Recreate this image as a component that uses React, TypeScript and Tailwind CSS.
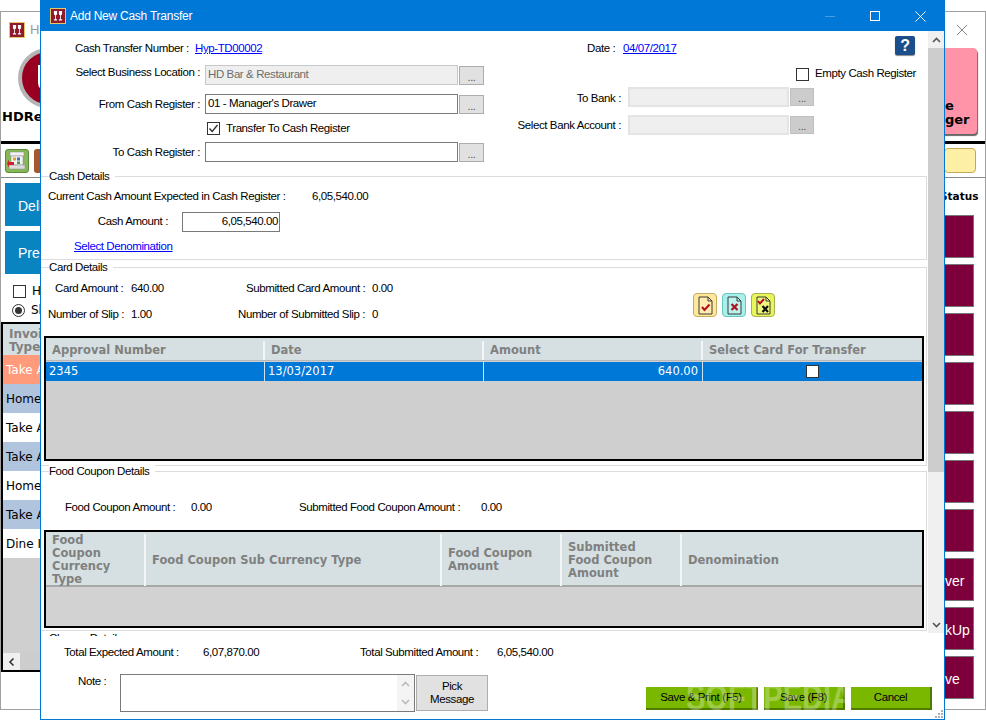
import React from 'react';

const sans = "font-['Liberation_Sans',Arial,sans-serif]";
const verdana = "font-['DejaVu_Sans',Verdana,sans-serif]";
const link = 'text-[#0000ff] underline whitespace-nowrap';
const browseBtn = 'flex items-end justify-center w-[25px] h-[19px] ml-[1px] bg-[#e1e1e1] border border-[#adadad] text-[11px] leading-[14px] text-[#555]';

function FormRow({ label, value, disabled }: { label: string; value?: string; disabled?: boolean }) {
  return (
    <div className="flex items-center h-[20px]">
      <div className={`w-[164px] pr-[5px] text-right whitespace-nowrap leading-[14px] ${disabled ? 'mb-[6px]' : ''}`}>{label}</div>
      <div className={`w-[253px] h-[20px] flex items-center px-[2px] border ${disabled ? 'bg-[#efefef] border-[#c8c8c8] text-[#6d6d6d]' : 'bg-white border-[#7a7a7a]'}`}>{value}</div>
      <div className={browseBtn}>...</div>
    </div>
  );
}

function RightRow({ label, drop }: { label: string; drop?: boolean }) {
  return (
    <div className="flex items-center h-[20px]">
      <div className={`w-[114px] pr-[7px] text-right whitespace-nowrap leading-[14px] ${drop ? 'mt-[2px]' : ''}`}>{label}</div>
      <div className="w-[161px] h-[20px] bg-[#efefef] border-2 border-[#e4e4e4]" />
      <div className="flex items-end justify-center w-[24px] h-[18px] ml-[1px] bg-[#cccccc] border border-[#c0c0c0] text-[11px] leading-[14px] text-[#555]">...</div>
    </div>
  );
}

function Check({ checked }: { checked?: boolean }) {
  return (
    <span className="flex items-center justify-center w-[13px] h-[13px] border border-[#333] bg-white shrink-0">
      {checked && (
        <svg width="11" height="11" viewBox="0 0 11 11" fill="none" stroke="#333" strokeWidth="1.4">
          <path d="M1.5 5.5 L4.2 8.5 L9.5 2" />
        </svg>
      )}
    </span>
  );
}

function Fieldset({ title, className, children }: { title: string; className?: string; children?: React.ReactNode }) {
  return (
    <div className={`border-t border-r border-b border-[#dcdcdc] ${className ?? ''}`}>
      <div className="-mt-[8px] ml-[8px] w-fit bg-white pr-[6px] leading-[14px] whitespace-nowrap">{title}</div>
      {children}
    </div>
  );
}

function HeaderCell({ children, last }: { children: React.ReactNode; last?: boolean }) {
  return (
    <div className={`flex items-center pl-[6px] leading-[13px] whitespace-nowrap ${last ? '' : 'border-r-2 border-[#f4f6f6]'}`}>
      <span>{children}</span>
    </div>
  );
}

function DocIcon({ bg, border, mark }: { bg: string; border: string; mark: 'check' | 'cross' | 'both' }) {
  return (
    <div className={`w-[24px] h-[24px] rounded-[4px] border flex items-center justify-center ${bg} ${border}`}>
      <svg width="17" height="19" viewBox="0 0 17 19" fill="none">
        <path d="M2 1 H11 L15 5 V18 H2 Z" stroke="#3a3a3a" strokeWidth="1" fill="rgba(255,255,255,0.2)" />
        <path d="M11 1 V5 H15" stroke="#3a3a3a" strokeWidth="1" />
        {mark === 'check' && <path d="M5 11 L7.5 14 L12.5 8.5" stroke="#b01020" strokeWidth="2" />}
        {mark === 'cross' && <path d="M5.5 8 L11.5 14 M11.5 8 L5.5 14" stroke="#b01020" strokeWidth="2.2" />}
        {mark === 'both' && (
          <>
            <path d="M3 5 L5 7.5 L9 3" stroke="#b01020" strokeWidth="2" />
            <path d="M7.5 10 L13 16 M13 10 L7.5 16" stroke="#111" strokeWidth="2.2" />
          </>
        )}
      </svg>
    </div>
  );
}

function AppIcon() {
  return (
    <span className="flex items-center justify-center w-[16px] h-[16px] bg-[#8f1a2c] border border-[#e5c76b] shrink-0">
      <svg width="10" height="10" viewBox="0 0 11 11" fill="#fff">
        <path d="M1 0 H4.5 V3 A1.75 1.75 0 0 1 3.2 4.8 V9 H4.5 V10.5 H1 V9 H2.3 V4.8 A1.75 1.75 0 0 1 1 3 Z" />
        <path d="M6.5 0 H10 V3 A1.75 1.75 0 0 1 8.7 4.8 V9 H10 V10.5 H6.5 V9 H7.8 V4.8 A1.75 1.75 0 0 1 6.5 3 Z" />
      </svg>
    </span>
  );
}

function RegisterIcon() {
  return (
    <div className="w-[24px] h-[24px] rounded-[3px] bg-[#86b85a] border border-[#5d8a36] flex items-center justify-center">
      <svg width="20" height="20" viewBox="0 0 20 20">
        <rect x="3" y="1" width="14" height="4" fill="#f2f2f2" stroke="#888" strokeWidth="0.5" />
        <rect x="4" y="5" width="12" height="9" fill="#f4f4f4" stroke="#888" strokeWidth="0.5" />
        <rect x="6" y="6.5" width="3" height="3" fill="#e8a020" />
        <rect x="10" y="6.5" width="3" height="3" fill="#3a70c0" />
        <rect x="10" y="10.5" width="3" height="2.5" fill="#40a040" />
        <rect x="2" y="14" width="16" height="4" fill="#ddd" stroke="#888" strokeWidth="0.5" />
        <path d="M7 11 L2 11 L2 8.5 L0 12.5 L2 16.5 L2 14 L7 14 Z" fill="#d0202a" />
      </svg>
    </div>
  );
}

function ArrowUp({ color = '#555' }: { color?: string }) {
  return (
    <svg width="9" height="6" viewBox="0 0 9 6" fill="none" stroke={color} strokeWidth="1.6"><path d="M1 5 L4.5 1.5 L8 5" /></svg>
  );
}

function ArrowDown({ color = '#555' }: { color?: string }) {
  return (
    <svg width="9" height="6" viewBox="0 0 9 6" fill="none" stroke={color} strokeWidth="1.6"><path d="M1 1 L4.5 4.5 L8 1" /></svg>
  );
}

function GreenButton({ label, w }: { label: string; w: string }) {
  return (
    <div className={`${w} h-[23px] pt-[1px] flex items-center justify-center bg-[#7ab800] border-r-2 border-b-2 border-[#4e7a00] whitespace-nowrap`}>{label}</div>
  );
}

function BackgroundWindow() {
  const rows: [string, string, string][] = [
    ['Take A', 'bg-[#ff9a7a]', 'text-white'],
    ['Home', 'bg-[#b0c4de]', 'text-black'],
    ['Take A', 'bg-white', 'text-black'],
    ['Take A', 'bg-[#b0c4de]', 'text-black'],
    ['Home', 'bg-white', 'text-black'],
    ['Take A', 'bg-[#b0c4de]', 'text-black'],
    ['Dine I', 'bg-white', 'text-black'],
  ];
  const tiles = ['', '', '', '', '', '', '', 'ver', 'kUp', 've'];
  return (
    <div className="absolute left-0 top-[11px] w-[986px] h-[699px] bg-white border border-[#a0a0a0] overflow-hidden flex flex-col">
      <div className="h-[36px] flex items-center pl-[8px] shrink-0">
        <AppIcon />
        <span className={`ml-[5px] text-[13px] text-[#999] ${sans}`}>HD</span>
        <svg className="ml-auto mr-[17px]" width="12" height="12" viewBox="0 0 12 12" stroke="#888" strokeWidth="1"><path d="M1 1 L11 11 M11 1 L1 11" /></svg>
      </div>
      <div className="h-[93px] flex justify-between shrink-0">
        <div className="pl-[1px]">
          <div className="ml-[16px] w-[60px] h-[60px] rounded-full bg-[#99001f] border-[4px] border-[#b5b5b5] flex items-center justify-center">
            <span className="w-[20px] h-[26px] border-[3px] border-t-0 border-white rounded-b-[8px]" />
          </div>
          <div className={`font-bold text-[13px] leading-[18px] ${verdana}`}>HDRestaurant</div>
        </div>
        <div className={`relative w-[50px] h-[86px] rounded-[4px] bg-[#ff93a8] shadow-[1px_2px_1px_#666] mr-[8px] flex flex-col justify-end pb-[7px] pl-[18px] text-[13px] font-bold leading-[14px] ${verdana}`}>
          <span className="absolute left-[12px] top-[15px] w-[6px] h-[30px] bg-white border border-[#888] rounded-[1px]" />
          <span>e</span>
          <span>ger</span>
        </div>
      </div>
      <div className="h-[3px] bg-black shrink-0" />
      <div className="h-[34px] flex items-center justify-between pl-[4px] pr-[9px] border-b border-[#888] shrink-0">
        <div className="flex gap-[5px]">
          <RegisterIcon />
          <div className="w-[24px] h-[24px] rounded-[3px] bg-[#a5562c]" />
        </div>
        <div className="w-[32px] h-[25px] rounded-[4px] bg-[#fdf0a6] border border-[#c8a850]" />
      </div>
      <div className="flex-1 flex">
        <div className="w-[44px] shrink-0 overflow-hidden">
          <div className={`ml-[4px] mt-[5px] w-[80px] h-[43px] pt-[3px] bg-[#0a84c1] text-white text-[14px] flex items-center pl-[13px] ${sans}`}>Delivery</div>
          <div className={`ml-[4px] mt-[5px] w-[80px] h-[43px] pt-[2px] bg-[#0a84c1] text-white text-[14px] flex items-center pl-[13px] ${sans}`}>Pre</div>
          <div className={`flex items-center ml-[12px] mt-[11px] gap-[6px] text-[12px] leading-[13px] ${verdana}`}>
            <Check />
            <span>Hide</span>
          </div>
          <div className={`flex items-center ml-[11px] mt-[6px] gap-[6px] text-[12px] leading-[13px] ${verdana}`}>
            <span className="w-[13px] h-[13px] rounded-full border border-[#333] flex items-center justify-center shrink-0"><span className="w-[7px] h-[7px] rounded-full bg-[#333]" /></span>
            <span>Show</span>
          </div>
          <div className="mt-[5px] h-[350px] w-[60px] border-2 border-black bg-[#cfcfcf] flex flex-col">
            <div className={`h-[31px] bg-[#d6e0e2] text-[#808080] font-bold text-[12px] leading-[13px] pl-[6px] pt-[4px] shrink-0 ${verdana}`}>Invoice<br />Type</div>
            {rows.map(([t, bg, fg], i) => (
              <div key={i} className={`h-[29px] flex items-center pl-[3px] text-[12px] shrink-0 ${bg} ${fg} ${verdana}`}>{t}</div>
            ))}
            <div className="flex-1" />
            <div className="h-[17px] bg-[#f0f0f0] flex items-center"><span className="w-[17px] flex justify-center -rotate-90"><ArrowUp color="#333" /></span><span className="flex-1 h-full bg-[#cdcdcd]" /></div>
          </div>
        </div>
        <div className="flex-1" />
        <div className="w-[42px] shrink-0">
          <div className={`h-[37px] pt-[11px] -ml-[3px] font-bold text-[10.5px] leading-[14px] ${verdana}`}>Status</div>
          <div className="flex flex-col gap-[6px]">
            {tiles.map((t, i) => (
              <div key={i} className={`ml-[1px] w-[30px] h-[43px] pt-[3px] bg-[#7d003c] border border-[#777] text-white text-[14px] flex items-center overflow-hidden ${sans}`}>{t}</div>
            ))}
          </div>
        </div>
      </div>
    </div>
  );
}

function CashTransferDialog() {
  return (
    <div className="absolute left-[40px] top-0 w-[905px] h-[720px] bg-white border border-[#0078d7] flex flex-col overflow-hidden text-[11.5px] tracking-[-0.4px]">
      <div className="h-[30px] bg-[#0078d7] flex items-center pl-[9px] text-white text-[12px] tracking-[-0.25px] shrink-0">
        <AppIcon />
        <span className="ml-[4px]">Add New Cash Transfer</span>
        <div className="ml-auto flex items-center">
          <span className="w-[10px] h-px bg-[#4a9be0] mr-[35px]" />
          <span className="w-[10px] h-[10px] border border-white mr-[35px]" />
          <svg className="mr-[18px]" width="11" height="11" viewBox="0 0 11 11" stroke="#fff" strokeWidth="1"><path d="M0.5 0.5 L10.5 10.5 M10.5 0.5 L0.5 10.5" /></svg>
        </div>
      </div>

      <div className="flex h-[605px] shrink-0 overflow-hidden">
        <div className="w-[886px] shrink-0">
          <div className="flex h-[137px]">
            <div className="w-[473px] shrink-0 pt-[10px]">
              <div className="flex h-[14px] leading-[14px]">
                <div className="w-[154px] pl-[34px] whitespace-nowrap">Cash Transfer Number :</div>
                <a className={link}>Hyp-TD00002</a>
              </div>
              <div className="mt-[10px]"><FormRow label="Select Business Location :" value="HD Bar & Restaurant" disabled /></div>
              <div className="mt-[9px]"><FormRow label="From Cash Register :" value="01 - Manager's Drawer" /></div>
              <div className="mt-[8px] ml-[166px] flex items-center gap-[6px] leading-[13px] whitespace-nowrap"><Check checked /><span>Transfer To Cash Register</span></div>
              <div className="mt-[7px]"><FormRow label="To Cash Register :" /></div>
            </div>
            <div className="flex-1 pt-[10px] relative">
              <div className="flex h-[14px] leading-[14px] pl-[73px]">
                <span className="w-[36px] whitespace-nowrap">Date :</span>
                <a className={link}>04/07/2017</a>
              </div>
              <span className="absolute left-[381px] top-[5px] w-[20px] h-[19px] rounded-[2px] bg-[#1a4f8b] shadow-[0_1px_1px_#888] text-white font-bold text-[16px] leading-[19px] text-center">?</span>
              <div className="mt-[12px] pl-[282px] flex items-center gap-[6px] h-[14px] whitespace-nowrap"><Check /><span>Empty Cash Register</span></div>
              <div className="mt-[6px]"><RightRow label="To Bank :" drop /></div>
              <div className="mt-[8px]"><RightRow label="Select Bank Account :" /></div>
            </div>
          </div>

          <Fieldset title="Cash Details" className="mt-[8px] h-[84px]">
            <div className="flex pl-[7px] mt-[6px] leading-[14px] whitespace-nowrap">
              <span className="w-[264px]">Current Cash Amount Expected in Cash Register :</span>
              <span>6,05,540.00</span>
            </div>
            <div className="flex items-center mt-[9px] whitespace-nowrap">
              <span className="w-[127px] text-right">Cash Amount :</span>
              <span className="ml-[14px] w-[98px] h-[20px] border border-[#7a7a7a] flex items-center justify-end pr-[1px]">6,05,540.00</span>
            </div>
            <a className={`block ml-[33px] mt-[7px] leading-[14px] ${link}`}>Select Denomination</a>
          </Fieldset>

          <Fieldset title="Card Details" className="mt-[7px] h-[199px]">
            <div className="relative">
              <div className="flex mt-[7px] leading-[14px] h-[14px] whitespace-nowrap">
                <span className="w-[90px] pl-[14px]">Card Amount :</span>
                <span className="w-[115px]">640.00</span>
                <span className="w-[126px]">Submitted Card Amount :</span>
                <span>0.00</span>
              </div>
              <div className="flex mt-[12px] leading-[14px] h-[14px] whitespace-nowrap">
                <span className="w-[90px] pl-[7px]">Number of Slip :</span>
                <span className="w-[107px]">1.00</span>
                <span className="w-[134px]">Number of Submitted Slip :</span>
                <span>0</span>
              </div>
              <div className="absolute left-[652px] top-[12px] flex gap-[5px]">
                <DocIcon bg="bg-[#ffe89a]" border="border-[#c8ac60]" mark="check" />
                <DocIcon bg="bg-[#a8f0ea]" border="border-[#6cc4c0]" mark="cross" />
                <DocIcon bg="bg-[#e8f65a]" border="border-[#a8b050]" mark="both" />
              </div>
            </div>
            <div className={`mt-[15px] ml-[3px] w-[880px] h-[125px] border-2 border-black bg-[#cfcfcf] text-[11.5px] tracking-normal ${verdana}`}>
              <div className="grid grid-cols-[219px_219px_219px_219px] h-[23px] pt-[3px] bg-[#d6e0e2] border-b border-[#b8b8b8] text-[#808080] font-bold">
                <HeaderCell>Approval Number</HeaderCell>
                <HeaderCell>Date</HeaderCell>
                <HeaderCell>Amount</HeaderCell>
                <HeaderCell last>Select Card For Transfer</HeaderCell>
              </div>
              <div className="grid grid-cols-[219px_219px_219px_219px] h-[19px] mt-[1px] bg-[#0078d7] text-white items-center">
                <span className="pl-[3px] border-r border-[#d0e4f5] leading-[19px]">2345</span>
                <span className="pl-[3px] border-r border-[#d0e4f5] leading-[19px]">13/03/2017</span>
                <span className="pr-[4px] text-right border-r border-[#d0e4f5] leading-[19px]">640.00</span>
                <span className="flex justify-center"><span className="w-[13px] h-[13px] bg-white border border-[#333]" /></span>
              </div>
            </div>
          </Fieldset>

          <Fieldset title="Food Coupon Details" className="mt-[5px] h-[160px]">
            <div className="flex mt-[22px] pl-[24px] leading-[14px] whitespace-nowrap">
              <span className="w-[126px]">Food Coupon Amount :</span>
              <span className="w-[108px]">0.00</span>
              <span className="w-[182px]">Submitted Food Coupon Amount :</span>
              <span>0.00</span>
            </div>
            <div className={`mt-[16px] ml-[3px] w-[880px] h-[98px] border-2 border-black bg-[#d2d2d2] text-[11.5px] tracking-normal ${verdana}`}>
              <div className="grid grid-cols-[100px_296px_120px_120px_240px] h-[55px] pt-[2px] bg-[#d6e0e2] border-b-2 border-[#a8a8a8] text-[#808080] font-bold">
                <HeaderCell>Food<br />Coupon<br />Currency<br />Type</HeaderCell>
                <HeaderCell>Food Coupon Sub Currency Type</HeaderCell>
                <HeaderCell>Food Coupon<br />Amount</HeaderCell>
                <HeaderCell>Submitted<br />Food Coupon<br />Amount</HeaderCell>
                <HeaderCell last>Denomination</HeaderCell>
              </div>
            </div>
          </Fieldset>
          <div className="ml-[8px] leading-[14px] whitespace-nowrap">Cheque Details</div>
        </div>
        <div className="w-[17px] ml-[1px] h-[602px] bg-[#f0f0f0] flex flex-col shrink-0">
          <div className="h-[17px] flex items-center justify-center"><ArrowUp /></div>
          <div className="h-[424px] bg-[#cdcdcd]" />
          <div className="flex-1" />
          <div className="h-[17px] flex items-center justify-center"><ArrowDown /></div>
        </div>
      </div>

      <div className="relative flex-1">
        <div className="flex pl-[23px] pt-[9px] leading-[14px] whitespace-nowrap">
          <span className="w-[139px]">Total Expected Amount :</span>
          <span className="w-[157px]">6,07,870.00</span>
          <span className="w-[137px]">Total Submitted Amount :</span>
          <span>6,05,540.00</span>
        </div>
        <div className="flex mt-[15px]">
          <div className="w-[79px] pl-[37px] leading-[14px]">Note :</div>
          <div className="w-[295px] h-[38px] border border-[#7a7a7a] flex justify-end">
            <div className="w-[17px] flex flex-col items-center justify-around bg-[#f4f4f4]"><ArrowUp color="#bbb" /><ArrowDown color="#bbb" /></div>
          </div>
          <div className="ml-[1px] mt-[1px] w-[72px] h-[36px] bg-[#e1e1e1] border border-[#adadad] text-center leading-[13px] flex items-center justify-center">Pick<br />Message</div>
          <div className="ml-[158px] mt-[13px] flex gap-[6px]">
            <GreenButton label="Save & Print (F5)" w="w-[112px]" />
            <GreenButton label="Save (F8)" w="w-[81px]" />
            <GreenButton label="Cancel" w="w-[81px]" />
          </div>
        </div>
        <svg className="absolute right-0 bottom-0" width="10" height="10" viewBox="0 0 10 10" fill="#b0b0b0">
          <rect x="7" y="1" width="2" height="2" /><rect x="4" y="4" width="2" height="2" /><rect x="7" y="4" width="2" height="2" /><rect x="1" y="7" width="2" height="2" /><rect x="4" y="7" width="2" height="2" /><rect x="7" y="7" width="2" height="2" />
        </svg>
      </div>
    </div>
  );
}

export default function App() {
  return (
    <div className={`relative w-[986px] h-[725px] bg-white overflow-hidden text-[12px] text-black ${sans}`}>
      <BackgroundWindow />
      <CashTransferDialog />
      <span className="absolute left-[686px] top-[681px] text-[29px] leading-[32px] font-bold scale-y-[1.25] text-white/30 pointer-events-none">SOFTPEDIA</span>
    </div>
  );
}
